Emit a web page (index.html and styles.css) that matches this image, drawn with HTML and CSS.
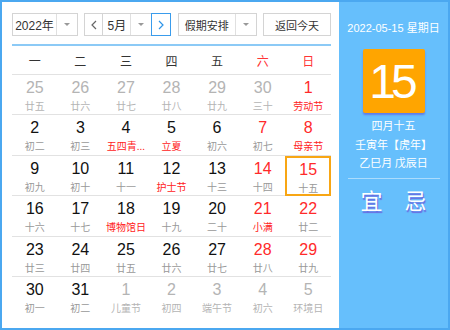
FILE: index.html
```html
<!DOCTYPE html>
<html>
<head>
  <title>万年历</title>
  <link rel="stylesheet" href="styles.css">
</head>
<body>
  <div class="calendar">
    <div class="main">
      <!-- Toolbar -->
      <div class="toolbar">
        <div class="select year-select">
          <span class="select-text">2022年</span>
          <span class="select-arrow"></span>
        </div>
        <div class="month-group">
          <button class="nav-btn">
            <svg width="6" height="10" viewBox="0 0 6 10"><polyline points="5,1 1,5 5,9" fill="none" stroke="#666" stroke-width="1.2"/></svg>
          </button>
          <div class="select month-select">
            <span class="select-text">5月</span>
            <span class="select-arrow"></span>
          </div>
          <button class="nav-btn nav-active">
            <svg width="6" height="10" viewBox="0 0 6 10"><polyline points="1,1 5,5 1,9" fill="none" stroke="#2e95e8" stroke-width="1.2"/></svg>
          </button>
        </div>
        <div class="select holiday-select">
          <span class="select-text">假期安排</span>
          <span class="select-arrow"></span>
        </div>
        <button class="today-btn">返回今天</button>
      </div>

      <!-- Week header -->
      <div class="week-head">
        <span>一</span><span>二</span><span>三</span><span>四</span><span>五</span>
        <span class="red">六</span><span class="red">日</span>
      </div>

      <!-- Days -->
      <div class="days">
        <div class="day other"><b>25</b><i>廿五</i></div>
        <div class="day other"><b>26</b><i>廿六</i></div>
        <div class="day other"><b>27</b><i>廿七</i></div>
        <div class="day other"><b>28</b><i>廿八</i></div>
        <div class="day other"><b>29</b><i>廿九</i></div>
        <div class="day other"><b>30</b><i>三十</i></div>
        <div class="day weekend"><b>1</b><i class="fest">劳动节</i></div>

        <div class="day"><b>2</b><i>初二</i></div>
        <div class="day"><b>3</b><i>初三</i></div>
        <div class="day"><b>4</b><i class="fest">五四青...</i></div>
        <div class="day"><b>5</b><i class="fest">立夏</i></div>
        <div class="day"><b>6</b><i>初六</i></div>
        <div class="day weekend"><b>7</b><i>初七</i></div>
        <div class="day weekend"><b>8</b><i class="fest">母亲节</i></div>

        <div class="day"><b>9</b><i>初九</i></div>
        <div class="day"><b>10</b><i>初十</i></div>
        <div class="day"><b>11</b><i>十一</i></div>
        <div class="day"><b>12</b><i class="fest">护士节</i></div>
        <div class="day"><b>13</b><i>十三</i></div>
        <div class="day weekend"><b>14</b><i>十四</i></div>
        <div class="day weekend today"><b>15</b><i>十五</i></div>

        <div class="day"><b>16</b><i>十六</i></div>
        <div class="day"><b>17</b><i>十七</i></div>
        <div class="day"><b>18</b><i class="fest">博物馆日</i></div>
        <div class="day"><b>19</b><i>十九</i></div>
        <div class="day"><b>20</b><i>二十</i></div>
        <div class="day weekend"><b>21</b><i class="fest">小满</i></div>
        <div class="day weekend"><b>22</b><i>廿二</i></div>

        <div class="day"><b>23</b><i>廿三</i></div>
        <div class="day"><b>24</b><i>廿四</i></div>
        <div class="day"><b>25</b><i>廿五</i></div>
        <div class="day"><b>26</b><i>廿六</i></div>
        <div class="day"><b>27</b><i>廿七</i></div>
        <div class="day weekend"><b>28</b><i>廿八</i></div>
        <div class="day weekend"><b>29</b><i>廿九</i></div>

        <div class="day"><b>30</b><i>初一</i></div>
        <div class="day"><b>31</b><i>初二</i></div>
        <div class="day other"><b>1</b><i>儿童节</i></div>
        <div class="day other"><b>2</b><i>初四</i></div>
        <div class="day other"><b>3</b><i>端午节</i></div>
        <div class="day other"><b>4</b><i>初六</i></div>
        <div class="day other"><b>5</b><i>环境日</i></div>
      </div>
    </div>

    <!-- Selected day panel -->
    <div class="side">
      <div class="side-date">2022-05-15 星期日</div>
      <div class="side-day">15</div>
      <div class="side-lunar">
        <div>四月十五</div>
        <div>壬寅年【虎年】</div>
        <div>乙巳月 戊辰日</div>
      </div>
      <div class="side-luck">
        <span>宜</span>
        <span>忌</span>
      </div>
    </div>
  </div>
</body>
</html>
```

FILE: styles.css
```css
/* Page */
body {
  margin: 0;
  background-color: #fff;
  font-family: "Liberation Sans", "Noto Sans CJK SC", sans-serif;
}

.calendar {
  display: flex;
  width: 450px;
  height: 330px;
  box-sizing: border-box;
  border: 2px solid #4ba8f0;
}

/* Left part */
.main {
  width: 337px;
  box-sizing: border-box;
  padding: 11px 8px 0 10px;
}

/* Toolbar */
.toolbar {
  display: flex;
  justify-content: space-between;
  padding-bottom: 8px;
  border-bottom: 2px solid #8ccaf6;
}

.select {
  display: flex;
  height: 23px;
  box-sizing: border-box;
  border: 1px solid #d4d4d4;
  font-size: 11px;
  color: #333;
  font-family: "Noto Sans CJK SC", sans-serif;
}

.select-text {
  flex: 1;
  display: flex;
  align-items: center;
  justify-content: center;
}

.select-arrow {
  width: 20px;
  border-left: 1px solid #e0e0e0;
  position: relative;
}

.select-arrow::after {
  content: "";
  position: absolute;
  left: 7px;
  top: 9px;
  border-left: 3px solid transparent;
  border-right: 3px solid transparent;
  border-top: 3px solid #999;
}

.year-select {
  width: 66px;
}

.year-select .select-text {
  font-family: "Liberation Sans", "Noto Sans CJK SC", sans-serif;
  font-size: 12px;
}

.month-group {
  display: flex;
  width: 87px;
}

.nav-btn {
  width: 19px;
  height: 23px;
  padding: 0;
  background: #fff;
  border: 1px solid #d4d4d4;
  display: flex;
  align-items: center;
  justify-content: center;
}

.nav-active {
  width: 20px;
  border-color: #3a9cec;
}

.month-select {
  width: 48px;
  border-left: none;
  border-right: none;
}

.month-select .select-text {
  font-family: "Liberation Sans", "Noto Sans CJK SC", sans-serif;
  font-size: 12px;
}

.holiday-select {
  width: 79px;
}

.today-btn {
  width: 68px;
  height: 23px;
  padding: 0;
  background: #fff;
  border: 1px solid #d4d4d4;
  font-family: "Noto Sans CJK SC", sans-serif;
  font-size: 11px;
  color: #333;
}

/* Week header */
.week-head {
  display: grid;
  grid-template-columns: repeat(7, 1fr);
  height: 28px;
  border-bottom: 1px solid #e2e2e2;
  font-family: "Noto Sans CJK SC", sans-serif;
  font-size: 12px;
  color: #333;
}

.week-head span {
  display: flex;
  align-items: center;
  justify-content: center;
}

.red {
  color: #ff3535;
}

/* Day grid */
.days {
  display: grid;
  grid-template-columns: repeat(7, 1fr);
  grid-template-rows: repeat(6, 40.4px);
}

.day {
  display: flex;
  flex-direction: column;
  align-items: center;
  box-sizing: border-box;
  padding-top: 4px;
  border-bottom: 1px solid #e2e2e2;
}

.day:nth-last-child(-n+7) {
  border-bottom: none;
}

.day b {
  font-weight: normal;
  font-size: 16px;
  line-height: 18px;
  color: #111;
}

.day i {
  font-style: normal;
  font-family: "Noto Sans CJK SC", sans-serif;
  font-size: 10px;
  line-height: 16px;
  margin-top: 1px;
  color: #999;
  white-space: nowrap;
}

.day.weekend b {
  color: #ff2a2a;
}

.day i.fest {
  color: #ff2222;
}

.day.other b {
  color: #b4b4b4;
}

.day.other i {
  color: #b4b4b4;
}

.day.today {
  border: 2px solid #f8a614;
  padding-top: 3px;
}

/* Right panel */
.side {
  flex: 1;
  background-color: #66bffc;
  color: #fff;
  display: flex;
  flex-direction: column;
  align-items: center;
  padding-top: 18px;
}

.side-date {
  font-size: 11px;
  line-height: 16px;
}

.side-day {
  margin-top: 13px;
  width: 62px;
  height: 64px;
  background-color: #ffa500;
  border-radius: 2px;
  box-shadow: 0 2px 2px rgba(90, 80, 220, 0.6);
  display: flex;
  align-items: center;
  justify-content: center;
  font-size: 48px;
  letter-spacing: -5px;
  padding-right: 5px;
  box-sizing: border-box;
}

.side-lunar {
  margin-top: 3px;
  font-family: "Noto Sans CJK SC", sans-serif;
  font-size: 11px;
  line-height: 18.5px;
  text-align: center;
  width: 92px;
  padding-bottom: 6px;
  border-bottom: 1px solid rgba(255, 255, 255, 0.45);
}

.side-luck {
  display: flex;
  gap: 22px;
  margin-top: 7px;
  font-family: "Noto Sans CJK SC", sans-serif;
  font-size: 22px;
  line-height: 26px;
  text-shadow: 1px 2px 1px #6a6ae0;
}
```
